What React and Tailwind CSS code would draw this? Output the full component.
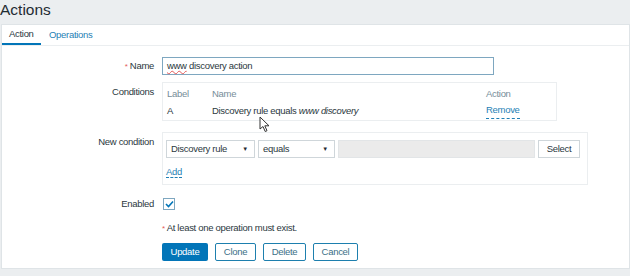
import React from "react";

const LINK = "text-[#1f7fb5]";
const TXT = "text-[#2b3840]";

function Label({ children, className = "" }) {
  return (
    <div className={`w-[152px] shrink-0 text-right text-[9.5px] ${TXT} ${className}`}>
      {children}
    </div>
  );
}

function FakeSelect({ value, width }) {
  return (
    <div
      className={`flex h-[18px] items-center justify-between border border-[#cfd6da] bg-white pl-[4px] pr-[6px] text-[9.5px] ${TXT} ${width}`}
    >
      <span>{value}</span>
      <span className="text-[6px] text-[#1f2c33]">▼</span>
    </div>
  );
}

function OutlineBtn({ children, width }) {
  return (
    <button
      type="button"
      className={`h-[18px] ${width} rounded-[2px] border border-[#1d7fae] bg-white text-[9.5px] leading-none text-[#3b6f87]`}
    >
      {children}
    </button>
  );
}

export default function App() {
  return (
    <div
      className="relative h-[276px] w-[630px] overflow-hidden bg-[#ebeef0]"
      style={{ fontFamily: '"Liberation Sans", Arial, sans-serif' }}
    >
      {/* page title */}
      <div className="h-[24px] pt-[1px] text-[15.5px] leading-[18px] text-[#1f2c33]">Actions</div>

      {/* main panel */}
      <div className="ml-[1px] h-[245px] border border-[#dfe4e7] bg-white tracking-[-0.3px]">
        {/* tabs */}
        <div className="flex h-[21px] border-b border-[#ebeef0] text-[9.5px]">
          <div className={`flex w-[39px] items-center border-b-2 border-[#0275b8] pl-[7px] ${TXT}`}>
            Action
          </div>
          <div className={`flex items-center pl-[8px] ${LINK}`}>Operations</div>
        </div>

        <div className="pt-[11px]">
          {/* Name */}
          <div className="flex items-center">
            <Label>
              <span className="text-[8px] text-[#e45959]">*</span> Name
            </Label>
            <div className={`ml-[8px] flex h-[18px] w-[332px] items-center border border-[#7ea7c0] px-[4px] text-[9.5px] ${TXT}`}>
              <span className="underline decoration-[#e45959] decoration-wavy decoration-1">www</span>
              &nbsp;discovery action
            </div>
          </div>

          {/* Conditions */}
          <div className="mt-[7px] flex items-start">
            <Label className="pt-[3px]">Conditions</Label>
            <div className="ml-[8px] h-[39px] w-[395px] border border-[#ebeef0] px-[4px] pt-[4px] text-[9.5px]">
              <div className="flex text-[#768d99]">
                <span className="w-[45px]">Label</span>
                <span className="w-[274px]">Name</span>
                <span>Action</span>
              </div>
              <div className={`mt-[3px] flex ${TXT}`}>
                <span className="w-[45px]">A</span>
                <span className="w-[274px]">
                  Discovery rule equals <i>www discovery</i>
                </span>
                <span className={`${LINK} border-b border-dashed border-[#1f7fb5] leading-[12px]`}>Remove</span>
              </div>
            </div>
          </div>

          {/* New condition */}
          <div className="mt-[11px] flex items-start">
            <Label className="pt-[3px]">New condition</Label>
            <div className="ml-[8px] h-[53px] w-[426px] border border-[#ebeef0] px-[3px] pt-[7px]">
              <div className="flex gap-[3px]">
                <FakeSelect value="Discovery rule" width="w-[89px]" />
                <FakeSelect value="equals" width="w-[77px]" />
                <div className="h-[18px] w-[197px] border border-[#e2e5e7] bg-[#ebebeb]" />
                <button
                  type="button"
                  className={`h-[18px] w-[42px] border border-[#cfd6da] bg-white text-[9.5px] leading-none ${TXT}`}
                >
                  Select
                </button>
              </div>
              <div className="mt-[6px] leading-[11px]">
                <span className={`${LINK} border-b border-dashed border-[#1f7fb5] text-[9.5px]`}>Add</span>
              </div>
            </div>
          </div>

          {/* Enabled */}
          <div className="mt-[12px] flex items-center">
            <Label>Enabled</Label>
            <div className="ml-[9px] flex h-[12px] w-[12px] items-center justify-center border border-[#7ea7c0] bg-white">
              <svg width="9" height="8" viewBox="0 0 9 8">
                <path d="M1 4 L3.5 6.5 L8 1.5" fill="none" stroke="#0275b8" strokeWidth="1.6" />
              </svg>
            </div>
          </div>

          {/* warning */}
          <div className={`ml-[160px] mt-[10px] text-[9.5px] ${TXT}`}>
            <span className="text-[8px] text-[#e45959]">*</span> At least one operation must exist.
          </div>

          {/* buttons */}
          <div className="ml-[160px] mt-[7px] flex gap-[7px]">
            <button
              type="button"
              className="h-[18px] w-[46px] rounded-[2px] bg-[#0275b8] text-[9.5px] leading-none text-white"
            >
              Update
            </button>
            <OutlineBtn width="w-[41px]">Clone</OutlineBtn>
            <OutlineBtn width="w-[43px]">Delete</OutlineBtn>
            <OutlineBtn width="w-[45px]">Cancel</OutlineBtn>
          </div>
        </div>
      </div>

      {/* mouse pointer over the page */}
      <svg className="absolute left-[259px] top-[116px]" width="12" height="17" viewBox="0 0 12 17">
        <path d="M1 1 L1 13 L4 10.5 L6.2 15.5 L8 14.7 L5.8 9.8 L10 9.8 Z" fill="#fff" stroke="#333" strokeWidth="1" />
      </svg>
    </div>
  );
}
